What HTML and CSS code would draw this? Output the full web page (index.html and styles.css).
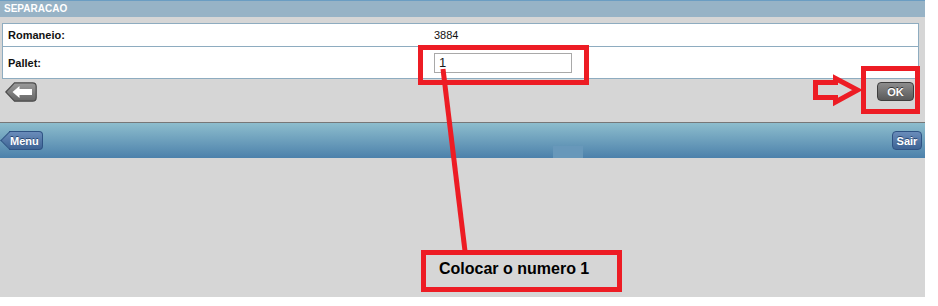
FILE: index.html
```html
<!DOCTYPE html>
<html lang="pt">
<head>
    <meta charset="UTF-8">
    <title>Separacao</title>
    <link rel="stylesheet" href="styles.css">
</head>
<body>
    <div class="screen">
        <div class="titleBar">SEPARACAO</div>
        <div class="form">
            <div class="formRow">
                <div class="label">Romaneio:</div>
                <div class="value">3884</div>
            </div>
            <div class="formRow tall">
                <div class="label">Pallet:</div>
                <div class="value"><input class="field" type="text" value="1"></div>
            </div>
        </div>
        <div class="actions">
            <button class="backBtn" aria-label="Voltar">
                <svg width="32" height="20" viewBox="0 0 32 20">
                    <defs>
                        <linearGradient id="backFill" x1="0" y1="0" x2="0" y2="1">
                            <stop offset="0" stop-color="#9c9c9c"/>
                            <stop offset="1" stop-color="#666"/>
                        </linearGradient>
                    </defs>
                    <path d="M0.8 10 L9.5 0.8 H27.5 Q31.2 0.8 31.2 4.5 V15.5 Q31.2 19.2 27.5 19.2 H9.5 Z" fill="url(#backFill)" stroke="#4d4d4d" stroke-width="1.2"/>
                    <path d="M7.5 10 L14.5 4 V7 H27 V13 H14.5 V16 Z" fill="#fff"/>
                </svg>
            </button>
            <button class="okBtn">OK</button>
        </div>
        <div class="footer">
            <button class="menuBtn">Menu</button>
            <div class="tabStub"></div>
            <button class="exitBtn">Sair</button>
        </div>

        <svg class="marks" width="925" height="297" viewBox="0 0 925 297">
            <g fill="none" stroke="#ed1c24" stroke-width="5">
                <rect x="420.5" y="47.5" width="166" height="35"/>
                <rect x="863.5" y="68.5" width="54" height="43"/>
                <rect x="423.5" y="252.5" width="196" height="37"/>
                <polygon points="815.5,82.5 835.5,82.5 835.5,78.5 857.5,90 835.5,102 835.5,97.5 815.5,97.5" stroke-linejoin="miter"/>
                <line x1="443" y1="69" x2="465" y2="251"/>
            </g>
        </svg>
        <div class="note">Colocar o numero 1</div>
    </div>
</body>
</html>
```

FILE: styles.css
```css
:root{
    --pageGray: #d6d6d6;
    --lineBlue: #8eacc0;
    --red: #ed1c24;
}
body{
    margin: 0;
    background: #fff;
    font-family: "Liberation Sans", Arial, sans-serif;
}
.screen{
    position: relative;
    display: flex;
    flex-direction: column;
    width: 925px;
    height: 297px;
    background: var(--pageGray);
}
.titleBar{
    height: 16px;
    line-height: 16px;
    border-top: 1px solid #6b9dc2;
    background: #97b3c6;
    color: #fff;
    font-size: 10px;
    font-weight: bold;
    padding-left: 4px;
}
.form{
    margin: 6px 6px 0 2px;
    background: #fff;
    border: 1px solid var(--lineBlue);
}
.formRow{
    display: grid;
    grid-template-columns: 431px 1fr;
    align-items: center;
    height: 22px;
    font-size: 11px;
    color: #111;
}
.formRow.tall{
    height: 31px;
    border-top: 1px solid var(--lineBlue);
}
.label{
    padding-left: 5px;
    font-weight: bold;
}
.field{
    display: block;
    box-sizing: border-box;
    width: 138px;
    height: 20px;
    margin: 0;
    padding: 0 4px;
    border: 1px solid #a9a9a9;
    font-family: "Liberation Sans", Arial, sans-serif;
    font-size: 13px;
    color: #1a1a1a;
    outline: none;
}
.actions{
    display: flex;
    justify-content: space-between;
    align-items: flex-start;
    box-sizing: border-box;
    height: 43px;
    padding: 3px 11px 0 5px;
}
.backBtn{
    width: 32px;
    height: 20px;
    padding: 0;
    border: none;
    background: none;
}
.backBtn svg{
    display: block;
}
.okBtn{
    width: 37px;
    height: 19px;
    padding: 0;
    border: 1px solid #3e3e3e;
    border-radius: 4px;
    background: linear-gradient(#8d8d8d, #5a5a5a);
    color: #fff;
    font-family: "Liberation Sans", Arial, sans-serif;
    font-size: 11px;
    font-weight: bold;
    text-shadow: 0 -1px 0 #333;
}
.footer{
    position: relative;
    display: flex;
    justify-content: space-between;
    align-items: center;
    height: 35px;
    padding: 0 3px 0 9px;
    border-top: 1px solid #777;
    background: linear-gradient(#8dbdcd, #4c81ab);
}
.menuBtn, .exitBtn{
    position: relative;
    height: 19px;
    padding: 0;
    border: 1px solid #2f5384;
    border-radius: 4px;
    background: linear-gradient(#6a8cba, #3e6495);
    color: #fff;
    font-family: "Liberation Sans", Arial, sans-serif;
    font-size: 11px;
    font-weight: bold;
    text-shadow: 0 -1px 0 #2a4670;
}
.menuBtn{
    width: 34px;
    border-left: none;
    border-radius: 0 4px 4px 0;
    padding-left: 1px;
    text-align: left;
}
.menuBtn::before{
    content: "";
    position: absolute;
    left: -6px;
    top: 2px;
    width: 12px;
    height: 12px;
    transform: rotate(45deg);
    border-left: 1px solid #2f5384;
    border-bottom: 1px solid #2f5384;
    background: linear-gradient(135deg, #6a8cba, #3e6495);
    z-index: -1;
}
.menuBtn{
    z-index: 0;
}
.exitBtn{
    width: 30px;
}
.tabStub{
    position: absolute;
    left: 553px;
    bottom: 0;
    width: 30px;
    height: 12px;
    background: #6898ba;
}
.marks{
    position: absolute;
    left: 0;
    top: 0;
    pointer-events: none;
}
.note{
    position: absolute;
    left: 439px;
    top: 260px;
    font-size: 16px;
    font-weight: bold;
    color: #000;
}
```
